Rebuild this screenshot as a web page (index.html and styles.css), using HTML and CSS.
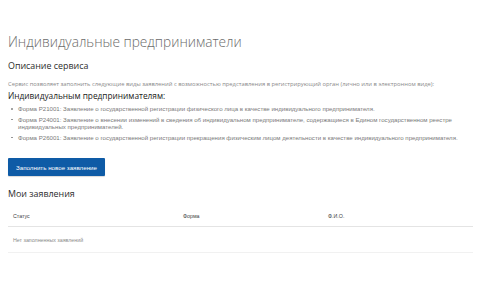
FILE: index.html
```html
<!DOCTYPE html>
<html lang="ru">
<head>
<meta charset="utf-8">
<title>Индивидуальные предприниматели</title>
<link rel="stylesheet" href="styles.css">
</head>
<body>
<main class="page">
  <h1 class="title">Индивидуальные предприниматели</h1>
  <h2 class="section-title">Описание сервиса</h2>
  <p class="desc">Сервис позволяет заполнить следующие виды заявлений с возможностью представления в регистрирующий орган (лично или в электронном виде):</p>
  <h3 class="sub-title">Индивидуальным предпринимателям:</h3>
  <ul class="forms">
    <li>Форма Р21001: Заявление о государственной регистрации физического лица в качестве индивидуального предпринимателя.</li>
    <li>Форма Р24001: Заявление о внесении изменений в сведения об индивидуальном предпринимателе, содержащиеся в Едином государственном реестре индивидуальных предпринимателей.</li>
    <li>Форма Р26001: Заявление о государственной регистрации прекращения физическим лицом деятельности в качестве индивидуального предпринимателя.</li>
  </ul>
  <button class="btn" type="button">Заполнить новое заявление</button>
  <h2 class="section-title mine">Мои заявления</h2>
  <div class="table">
    <div class="thead">
      <span class="col status">Статус</span>
      <span class="col form">Форма</span>
      <span class="col fio">Ф.И.О.</span>
    </div>
    <div class="empty">Нет заполненных заявлений</div>
  </div>
</main>
</body>
</html>
```

FILE: styles.css
```css
* { box-sizing: border-box; }
html, body { margin: 0; padding: 0; background: #fff; }
body { font-family: "Open Sans", "Liberation Sans", sans-serif; color: #333; }
.page { padding: 32px 7px 0 8px; width: 480px; }
.title {
  margin: 0;
  font-family: "Open Sans", sans-serif;
  font-weight: 300;
  font-size: 13.7px;
  line-height: 20px;
  color: #6b6b6b;
}
.section-title {
  margin: 8px 0 0;
  font-size: 8.9px;
  font-weight: 400;
  line-height: 12px;
  color: #2b2b2b;
}
.desc {
  margin: 8px 0 0;
  font-size: 5.8px;
  line-height: 8px;
  color: #8a8a8a;
}
.sub-title {
  margin: 2px 0 0;
  font-size: 8.3px;
  font-weight: 400;
  line-height: 11px;
  color: #1a1a1a;
}
.forms {
  margin: 4px 0 0;
  padding: 0 0 0 10px;
  list-style: none;
  font-family: "Liberation Sans", Arial, sans-serif;
  font-size: 6.1px;
  line-height: 7.5px;
  color: #7a7a7a;
}
.forms li { position: relative; margin-bottom: 3px; padding-right: 8px; }
.forms li::before {
  content: "";
  position: absolute;
  left: -7px;
  top: 3px;
  width: 1.8px;
  height: 1.8px;
  background: #888;
  border-radius: 50%;
}
.btn {
  display: block;
  margin: 17px 0 0;
  width: 97px;
  height: 18px;
  padding: 0;
  border: 0;
  border-radius: 1px;
  background: #0e5ba6;
  color: #fff;
  font-family: "Liberation Sans", Arial, sans-serif;
  font-size: 6.2px;
  box-shadow: 0 1px 1px rgba(0,0,0,0.15);
}
.mine { margin-top: 12px; }
.table { margin-top: 6px; width: 465px; }
.thead {
  display: flex;
  height: 21px;
  align-items: center;
  padding-left: 5px;
  border-bottom: 1.5px solid #e4e4e4;
  font-family: "Liberation Sans", Arial, sans-serif;
  font-size: 5.3px;
  color: #444;
}
.col.status { width: 170px; }
.col.form { width: 145px; }
.empty {
  height: 26px;
  padding-left: 5px;
  display: flex;
  align-items: center;
  border-bottom: 1px solid #f1f1f1;
  font-family: "Liberation Sans", Arial, sans-serif;
  font-size: 5.3px;
  color: #8a8a8a;
}
```
